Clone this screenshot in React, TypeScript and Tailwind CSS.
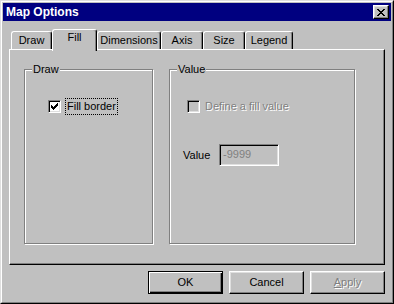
import React from 'react'

const tabs = [
  { label: 'Draw', width: 'w-[41px]' },
  { label: 'Fill', width: 'w-[45px]', active: true },
  { label: 'Dimensions', width: 'w-[64px]' },
  { label: 'Axis', width: 'w-[42px]' },
  { label: 'Size', width: 'w-[42px]' },
  { label: 'Legend', width: 'w-[48px]' },
]

function CloseButton() {
  return (
    <div className="w-[16px] h-[14px] bg-[#c0c0c0] border border-t-white border-l-white border-b-black border-r-black shadow-[inset_-1px_-1px_0_#808080,inset_1px_1px_0_#dfdfdf] flex items-center justify-center">
      <svg width="8" height="7" viewBox="0 0 8 7" shapeRendering="crispEdges">
        <g fill="#000">
          <rect x="0" y="0" width="2" height="1" />
          <rect x="6" y="0" width="2" height="1" />
          <rect x="1" y="1" width="2" height="1" />
          <rect x="5" y="1" width="2" height="1" />
          <rect x="2" y="2" width="4" height="1" />
          <rect x="3" y="3" width="2" height="1" />
          <rect x="2" y="4" width="4" height="1" />
          <rect x="1" y="5" width="2" height="1" />
          <rect x="5" y="5" width="2" height="1" />
          <rect x="0" y="6" width="2" height="1" />
          <rect x="6" y="6" width="2" height="1" />
        </g>
      </svg>
    </div>
  )
}

function Checkbox({ checked, disabled }: { checked?: boolean; disabled?: boolean }) {
  return (
    <div
      className={`w-[13px] h-[13px] shrink-0 border border-t-[#808080] border-l-[#808080] border-b-white border-r-white shadow-[inset_1px_1px_0_#000,inset_-1px_-1px_0_#dfdfdf] flex items-center justify-center ${disabled ? 'bg-[#c0c0c0]' : 'bg-white'}`}
    >
      {checked && (
        <svg width="7" height="7" viewBox="0 0 7 7" shapeRendering="crispEdges">
          <g fill="#000">
            <rect x="6" y="0" width="1" height="1" />
            <rect x="5" y="1" width="2" height="1" />
            <rect x="0" y="2" width="1" height="1" />
            <rect x="4" y="2" width="3" height="1" />
            <rect x="0" y="3" width="2" height="1" />
            <rect x="3" y="3" width="3" height="1" />
            <rect x="0" y="4" width="5" height="1" />
            <rect x="1" y="5" width="3" height="1" />
            <rect x="2" y="6" width="1" height="1" />
          </g>
        </svg>
      )}
    </div>
  )
}

function GroupBox({ title, className, children }: { title: string; className: string; children?: React.ReactNode }) {
  return (
    <div className={`relative h-[175px] border border-[#808080] shadow-[1px_1px_0_#fff,inset_1px_1px_0_#fff] ${className}`}>
      <span className="absolute left-[7px] -top-[7px] leading-[13px] px-[1px] bg-[#c0c0c0]">{title}</span>
      {children}
    </div>
  )
}

export default function App() {
  return (
    <div className="w-[394px] h-[304px] bg-[#c0c0c0] font-['Liberation_Sans',Arial,sans-serif] text-[11px] leading-[13px] text-black select-none">
      <div className="h-full border border-t-[#dfdfdf] border-l-[#dfdfdf] border-b-black border-r-black">
        <div className="h-full flex flex-col p-px border border-t-white border-l-white border-b-[#808080] border-r-[#808080]">
          <div className="h-[18px] shrink-0 bg-[#000080] flex items-center justify-between pl-[3px] pr-[2px]">
            <span className="text-white font-bold text-[12px]">Map Options</span>
            <CloseButton />
          </div>

          <div className="flex flex-col px-[6px] pt-[8px]">
            <div className="h-[20px] flex items-end pl-[2px]">
              {tabs.map((tab) =>
                tab.active ? (
                  <div
                    key={tab.label}
                    className={`${tab.width} h-[22px] -mb-[2px] relative z-10 bg-[#c0c0c0] rounded-t-[3px] border-l border-t border-r border-l-white border-t-white border-r-black shadow-[inset_-1px_0_0_#808080] flex justify-center pt-[1px]`}
                  >
                    {tab.label}
                  </div>
                ) : (
                  <div
                    key={tab.label}
                    className={`${tab.width} h-[18px] bg-[#c0c0c0] rounded-t-[3px] border-l border-t border-r border-l-white border-t-white border-r-black shadow-[inset_-1px_0_0_#808080] flex justify-center pt-[2px]`}
                  >
                    {tab.label}
                  </div>
                )
              )}
            </div>

            <div className="h-[216px] border border-t-white border-l-white border-b-black border-r-black shadow-[inset_-1px_-1px_0_#808080] flex gap-[16px] pl-[14px] pt-[19px]">
              <GroupBox title="Draw" className="w-[129px]">
                <div className="flex items-center gap-[4px] pl-[23px] pt-[28px]">
                  <Checkbox checked />
                  <span className="border border-dotted border-black px-[1px] py-[1px]">Fill border</span>
                </div>
              </GroupBox>

              <GroupBox title="Value" className="w-[186px]">
                <div className="flex items-center gap-[5px] pl-[17px] pt-[28px] h-[44px]">
                  <Checkbox disabled />
                  <span className="text-[#808080] [text-shadow:1px_1px_0_#fff]">Define a fill value</span>
                </div>
                <div className="flex items-center pl-[13px] mt-[30px]">
                  <span className="w-[36px]">Value</span>
                  <div className="w-[60px] h-[22px] border border-t-[#808080] border-l-[#808080] border-b-white border-r-white shadow-[inset_1px_1px_0_#000,inset_-1px_-1px_0_#dfdfdf] pl-[3px] pt-[3px] text-[#808080]">
                    -9999
                  </div>
                </div>
              </GroupBox>
            </div>

            <div className="flex justify-end gap-[6px] mt-[6px]">
              <button className="w-[75px] h-[23px] bg-[#c0c0c0] border border-black shadow-[inset_1px_1px_0_#fff,inset_-1px_-1px_0_#000,inset_-2px_-2px_0_#808080] flex items-center justify-center">
                OK
              </button>
              <button className="w-[75px] h-[23px] bg-[#c0c0c0] border border-t-white border-l-white border-b-black border-r-black shadow-[inset_-1px_-1px_0_#808080,inset_1px_1px_0_#dfdfdf] flex items-center justify-center">
                Cancel
              </button>
              <button className="w-[75px] h-[23px] bg-[#c0c0c0] border border-t-white border-l-white border-b-black border-r-black shadow-[inset_-1px_-1px_0_#808080,inset_1px_1px_0_#dfdfdf] flex items-center justify-center text-[#808080] [text-shadow:1px_1px_0_#fff]">
                <span><span className="underline">A</span>pply</span>
              </button>
            </div>
          </div>
        </div>
      </div>
    </div>
  )
}
